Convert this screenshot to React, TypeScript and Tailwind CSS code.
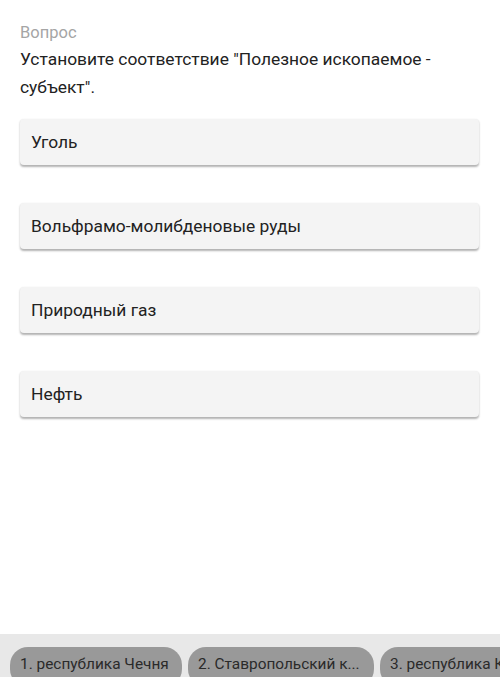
import type { ReactNode } from 'react'

const items = ['Уголь', 'Вольфрамо-молибденовые руды', 'Природный газ', 'Нефть']

const chips = [
  { label: '1. республика Чечня', w: 'w-[172px]' },
  { label: '2. Ставропольский к...', w: 'w-[186px]' },
  { label: '3. республика Калмыкия', w: 'w-[200px]' },
]

function Card({ children }: { children: ReactNode }) {
  return (
    <div className="flex h-[46px] items-center rounded-[4px] bg-[#f4f4f4] px-[11px] text-[17.4px] text-[#222] shadow-[0_1.5px_2px_rgba(0,0,0,0.3)]">
      {children}
    </div>
  )
}

export default function App() {
  return (
    <div className="flex h-[677px] w-[500px] flex-col overflow-hidden bg-white font-['Roboto',sans-serif]">
      <div className="flex-1 px-5 pt-[21px]">
        <div className="text-[16.5px] leading-[24px] text-[#a5a5a5]">Вопрос</div>
        <div className="text-[17.4px] leading-[28px] text-[#222]">
          Установите соответствие "Полезное ископаемое - субъект".
        </div>
        <div className="mt-[18px] flex flex-col gap-[38px] pr-[1px]">
          {items.map((t) => (
            <Card key={t}>{t}</Card>
          ))}
        </div>
      </div>
      <div className="flex h-[43px] gap-[6px] overflow-hidden bg-[#e8e8e8] pl-[10px] pt-[13px]">
        {chips.map((c) => (
          <div
            key={c.label}
            className={`${c.w} flex h-[40px] shrink-0 items-start whitespace-nowrap rounded-[18px] bg-[#999] px-[10px] pt-[6px] text-[15.4px] text-[#2a2a2a]`}
          >
            {c.label}
          </div>
        ))}
      </div>
    </div>
  )
}
